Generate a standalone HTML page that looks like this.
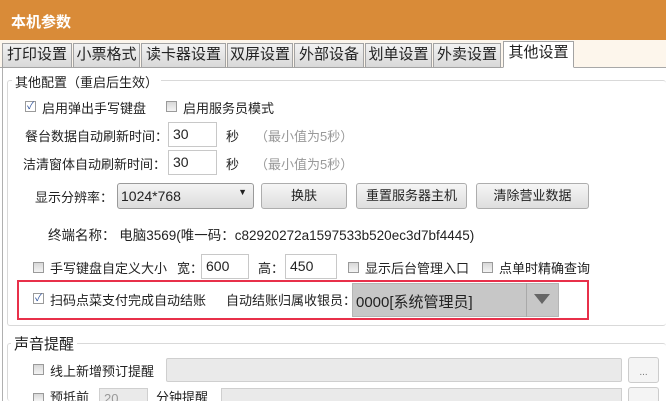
<!DOCTYPE html>
<html style="width:666px;height:401px;overflow:hidden"><head><meta charset="utf-8"><style>
*{margin:0;padding:0;box-sizing:border-box}
body{width:666px;height:401px;overflow:hidden;background:#fff;font-family:"Liberation Sans","Microsoft YaHei","Noto Sans CJK SC",sans-serif;font-size:13px;color:#222}
#w{position:relative;width:666px;height:401px;overflow:hidden}
.a{position:absolute;white-space:nowrap}
.hdr{left:0;top:0;width:666px;height:40px;background:#d98b38;color:#fff;font-size:15px;font-weight:bold;padding:11px 0 0 11px}
.tabbar{left:0;top:40px;width:666px;height:28px;background:#fdf6ec;border-bottom:1px solid #a8a8a8}
.tab{top:43px;height:25px;background:linear-gradient(#f2f2f2,#d8d8d8);border:1px solid #a3a3a3;font-size:15px;text-align:center;line-height:22px;color:#222}
.tab.act{background:#fff;border-bottom-color:#fff;top:41px;height:27px}
.grp{border:1px solid #d9d9d9;border-radius:3px}
.leg{background:#fff;padding:0 3px}
.cb{width:11px;height:11px;border:1px solid #9a9a9a;background:linear-gradient(#d8d8d8,#f4f4f4)}
.cbc{background:#fff}
.inp{border:1px solid #c8c8c8;background:#fff;height:25px;padding:3px 0 0 4px;font-size:14px}
.btn{border:1px solid #adadad;border-radius:3px;background:linear-gradient(#f6f6f6,#dedede);text-align:center;line-height:24px;height:26px}
.gray{color:#999}
</style></head><body><div id="w">
<div class="a hdr">本机参数</div>
<div class="a tabbar"></div>
<div class="a tab" style="left:2px;width:70px">打印设置</div>
<div class="a tab" style="left:73px;width:67px">小票格式</div>
<div class="a tab" style="left:141px;width:85px">读卡器设置</div>
<div class="a tab" style="left:227px;width:66px">双屏设置</div>
<div class="a tab" style="left:294px;width:70px">外部设备</div>
<div class="a tab" style="left:365px;width:67px">划单设置</div>
<div class="a tab" style="left:433px;width:68px">外卖设置</div>
<div class="a tab act" style="left:503px;width:71px">其他设置</div>
<div class="a" style="left:2px;top:68px;width:1px;height:333px;background:#b0b0b0"></div>

<div class="a grp" style="left:7px;top:80px;width:659px;height:246px;border-right:none"></div>
<div class="a leg" style="left:12px;top:72px">其他配置（重启后生效）</div>

<div class="a cb cbc" style="left:25px;top:101px;font-size:10px;line-height:9px;color:#2a4f9a;text-align:center">✓</div>
<div class="a" style="left:42px;top:98px">启用弹出手写键盘</div>
<div class="a cb" style="left:166px;top:101px"></div>
<div class="a" style="left:183px;top:98px">启用服务员模式</div>

<div class="a" style="left:25px;top:126px">餐台数据自动刷新时间：</div>
<div class="a inp" style="left:168px;top:122px;width:49px">30</div>
<div class="a" style="left:226px;top:126px">秒</div>
<div class="a gray" style="left:255px;top:126px">（最小值为5秒）</div>
<div class="a" style="left:23px;top:154px">洁清窗体自动刷新时间：</div>
<div class="a inp" style="left:168px;top:150px;width:49px">30</div>
<div class="a" style="left:226px;top:154px">秒</div>
<div class="a gray" style="left:255px;top:154px">（最小值为5秒）</div>

<div class="a" style="left:35px;top:187px">显示分辨率：</div>
<div class="a" style="left:117px;top:183px;width:137px;height:26px;border:1px solid #9a9a9a;border-radius:3px;background:linear-gradient(#f4f4f4,#dcdcdc);font-size:14px;padding:4px 0 0 3px">1024*768<span style="position:absolute;right:6px;top:3px;font-size:9px">▼</span></div>
<div class="a btn" style="left:261px;top:183px;width:86px">换肤</div>
<div class="a btn" style="left:356px;top:183px;width:111px">重置服务器主机</div>
<div class="a btn" style="left:476px;top:183px;width:113px">清除营业数据</div>

<div class="a" style="left:48px;top:224px;font-size:13.5px">终端名称： 电脑3569(唯一码：c82920272a1597533b520ec3d7bf4445)</div>

<div class="a cb" style="left:33px;top:262px"></div>
<div class="a" style="left:50px;top:258px">手写键盘自定义大小</div>
<div class="a" style="left:177px;top:258px">宽：</div>
<div class="a inp" style="left:201px;top:254px;width:48px">600</div>
<div class="a" style="left:258px;top:258px">高：</div>
<div class="a inp" style="left:285px;top:254px;width:52px">450</div>
<div class="a cb" style="left:348px;top:262px"></div>
<div class="a" style="left:365px;top:258px">显示后台管理入口</div>
<div class="a cb" style="left:482px;top:262px"></div>
<div class="a" style="left:499px;top:258px">点单时精确查询</div>

<div class="a" style="left:17px;top:280px;width:572px;height:40px;border:2px solid #e8304a"></div>
<div class="a cb cbc" style="left:33px;top:293px;font-size:10px;line-height:9px;color:#2a4f9a;text-align:center">✓</div>
<div class="a" style="left:50px;top:290px">扫码点菜支付完成自动结账</div>
<div class="a" style="left:226px;top:290px">自动结账归属收银员：</div>
<div class="a" style="left:352px;top:283px;width:207px;height:34px;background:#c7c7c7;border:1px solid #b5b5b5;font-size:15px;padding:7px 0 0 3px">0000[系统管理员]</div>
<div class="a" style="left:526px;top:283px;width:1px;height:34px;background:#a9a9a9"></div>
<div class="a" style="left:534px;top:294px;width:0;height:0;border-left:8px solid transparent;border-right:8px solid transparent;border-top:10px solid #666"></div>

<div class="a grp" style="left:7px;top:343px;width:659px;height:58px;border-right:none;border-bottom:none"></div>
<div class="a leg" style="left:11px;top:333px;font-size:15px">声音提醒</div>
<div class="a cb" style="left:33px;top:364px"></div>
<div class="a" style="left:50px;top:361px">线上新增预订提醒</div>
<div class="a" style="left:166px;top:358px;width:456px;height:24px;background:#eaeaea;border:1px solid #cfcfcf;border-radius:2px"></div>
<div class="a btn" style="left:628px;top:357px;width:31px;height:26px;background:#f4f4f4;border-color:#ccc;font-size:10px;color:#777;line-height:30px">...</div>
<div class="a cb" style="left:33px;top:393px;height:8px;border-bottom:none"></div>
<div class="a" style="left:50px;top:389px;height:12px;overflow:hidden;line-height:18px">预抵前</div>
<div class="a" style="left:99px;top:388px;width:49px;height:13px;background:#eaeaea;border:1px solid #cfcfcf;border-bottom:none;color:#999;padding:2px 0 0 4px;overflow:hidden">20</div>
<div class="a" style="left:156px;top:389px;height:12px;overflow:hidden;line-height:18px">分钟提醒</div>
<div class="a" style="left:221px;top:388px;width:401px;height:13px;background:#eaeaea;border:1px solid #cfcfcf;border-bottom:none"></div>
<div class="a" style="left:628px;top:387px;width:31px;height:14px;background:#f4f4f4;border:1px solid #ccc;border-bottom:none;border-radius:3px 3px 0 0"></div>
</div></body></html>
